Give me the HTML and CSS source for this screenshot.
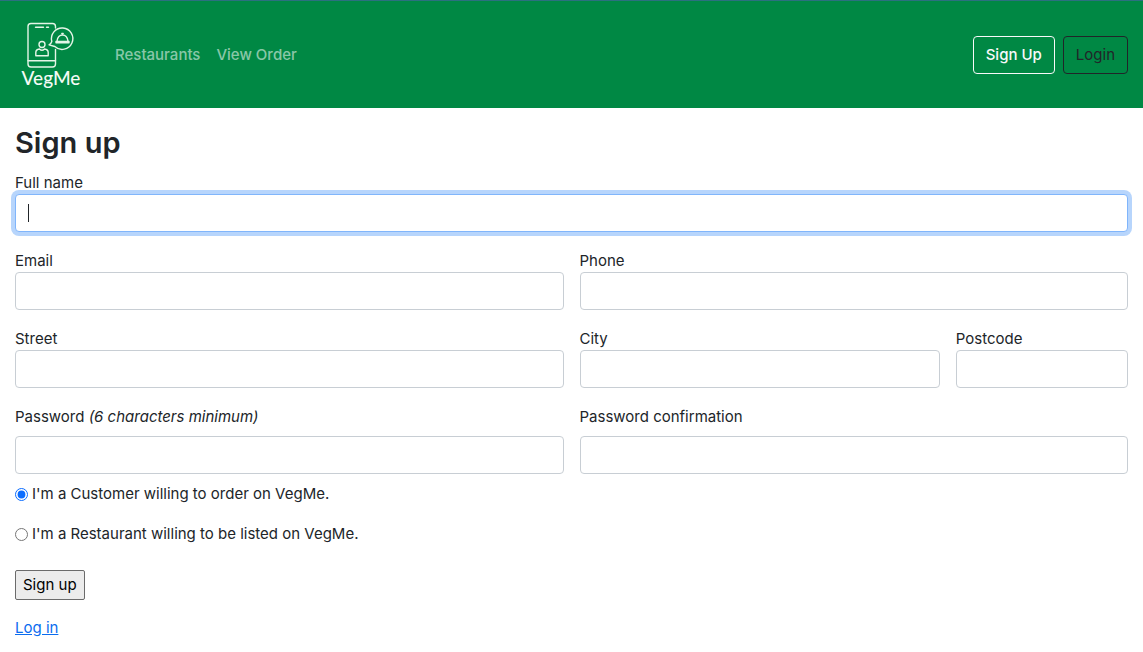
FILE: index.html
```html
<!DOCTYPE html>
<html lang="en">
<head>
<meta charset="utf-8">
<meta name="viewport" content="width=device-width, initial-scale=1">
<title>VegMe</title>
<link rel="stylesheet" href="styles.css">
</head>
<body>
<header class="navbar">
  <a class="brand" href="#" aria-label="VegMe home">
    <svg class="logo" width="72" height="72" viewBox="0 0 72 72" fill="none" stroke="#e4f5e7" stroke-width="1.4" stroke-linecap="round" stroke-linejoin="round">
      <path d="M40.500 9V7.500Q40.500 4.500 37.500 4.500H16Q13 4.500 13 7.500V45Q13 48 16 48H37.500Q40.500 48 40.500 45V30.500"/>
      <path d="M13 41.800H40.500M20.500 8.300H28.500M31.500 8.300H33.500"/>
      <circle cx="27" cy="25.500" r="3"/>
      <path d="M20.800 36.800V33.500Q20.800 30.500 24.500 30Q27 32.500 29.500 30Q33.200 30.500 33.200 33.500V36.800Z"/>
      <path d="M36.800 22.500A10.700 10.700 0 1 1 39.800 27.500L34 25.800Q36 25 36.800 22.500Z"/>
      <path d="M41 23.800H54V22.500H41ZM42 22Q43 16 47.500 16T53 22M46.800 14.500H48.200"/>
      <text class="logo-text" x="36" y="66" text-anchor="middle">VegMe</text>
    </svg>
  </a>
  <nav class="links">
    <a href="#">Restaurants</a>
    <a href="#">View Order</a>
  </nav>
  <div class="actions">
    <a class="btn btn-light" href="#">Sign Up</a>
    <a class="btn btn-dark" href="#">Login</a>
  </div>
</header>
<main class="page">
  <h1>Sign up</h1>
  <form>
    <div class="fields">
      <div class="field full"><label for="name">Full name</label><input class="control active" id="name" type="text" autofocus></div>
      <div class="field half"><label for="email">Email</label><input class="control" id="email" type="email"></div>
      <div class="field half"><label for="phone">Phone</label><input class="control" id="phone" type="tel"></div>
      <div class="field half"><label for="street">Street</label><input class="control" id="street" type="text"></div>
      <div class="field third"><label for="city">City</label><input class="control" id="city" type="text"></div>
      <div class="field sixth"><label for="postcode">Postcode</label><input class="control" id="postcode" type="text"></div>
      <div class="field half spaced"><label for="password">Password <em>(6 characters minimum)</em></label><input class="control" id="password" type="password"></div>
      <div class="field half spaced"><label for="confirm">Password confirmation</label><input class="control" id="confirm" type="password"></div>
    </div>
    <div class="roles">
      <label class="role"><input type="radio" name="role" checked>I'm a Customer willing to order on VegMe.</label>
      <label class="role"><input type="radio" name="role">I'm a Restaurant willing to be listed on VegMe.</label>
    </div>
    <button class="submit" type="submit">Sign up</button>
  </form>
  <a class="login" href="#">Log in</a>
</main>
</body>
</html>
```
FILE: styles.css
```css
* { box-sizing: border-box; }
body {
  margin: 0;
  background: #fff;
  color: #212529;
  font: 15px/24px Inter, sans-serif;
}
.navbar {
  display: flex;
  align-items: center;
  padding: 18px 15px 17px;
  background: #008844;
  border-top: 1px solid #2c7080;
}
.brand, .logo { display: block; }
.logo-text {
  fill: #f4fbf5;
  stroke: none;
  font: 500 19px Lato, sans-serif;
}
.links {
  display: flex;
  gap: 16px;
  margin-left: 28px;
}
.links a { color: rgba(255, 255, 255, 0.55); font-weight: 500; text-decoration: none; }
.actions { display: flex; gap: 8px; margin-left: auto; }
.btn {
  padding: 6px 12px;
  border: 1px solid;
  border-radius: 4px;
  text-decoration: none;
}
.btn-light { color: #f8f9fa; font-weight: 500; }
.btn-dark { color: #212529; }
.page { padding: 16px 15px; }
h1 {
  margin: 0 0 8px;
  font-size: 29px;
  line-height: 38px;
  font-weight: 600;
}
.fields {
  display: grid;
  grid-template-columns: repeat(12, minmax(0, 1fr));
  gap: 16px;
}
.field { display: flex; flex-direction: column; }
.field label { padding-top: 2px; line-height: 22px; }
.full { grid-column: span 12; }
.half { grid-column: span 6; }
.third { grid-column: span 4; }
.sixth { grid-column: span 2; }
.spaced { gap: 8px; }
.control {
  width: 100%;
  height: 38px;
  padding: 6px 12px;
  border: 1px solid #c8ced4;
  border-radius: 4px;
  background: #fff;
  color: inherit;
  font: inherit;
}
.control:focus, .control.active {
  outline: 0;
  border-color: #80b5fb;
  box-shadow: 0 0 0 4px #b7d5fc;
}
.control.active {
  caret-color: transparent;
  background: linear-gradient(#212529, #212529) 12px center / 1px 18px no-repeat #fff;
}
.roles {
  display: flex;
  flex-direction: column;
  align-items: flex-start;
  gap: 16px;
  margin: 8px 0 24px;
}
.role { display: flex; align-items: center; gap: 4px; }
.role input { width: 13px; height: 13px; margin: 0; accent-color: #0a6cff; }
.submit {
  display: block;
  height: 30px;
  padding: 0 7px;
  border: 1px solid #6b6b6b;
  border-radius: 2px;
  background: #ececec;
  color: #000;
  font: inherit;
}
.login { display: inline-block; margin-top: 16px; color: #0a6cef; }
```
